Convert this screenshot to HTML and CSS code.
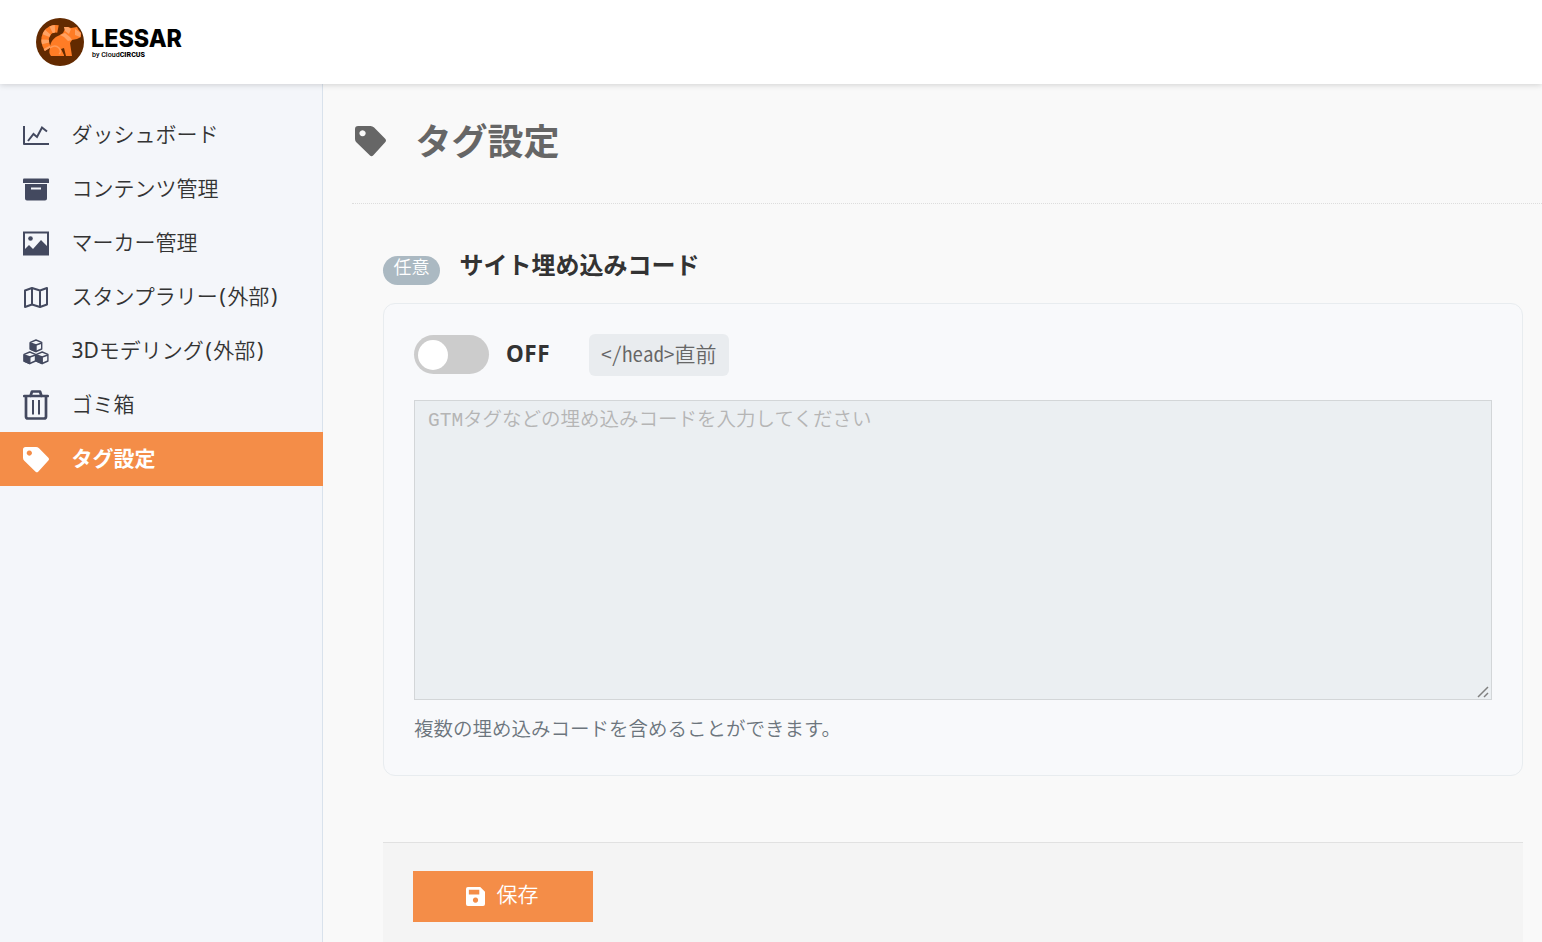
FILE: index.html
```html
<!DOCTYPE html>
<html lang="ja">
<head>
    <meta charset="UTF-8">
    <meta name="viewport" content="width=device-width, initial-scale=1.0">
    <title>タグ設定 | LESSAR</title>
    <link rel="stylesheet" href="styles.css">
</head>
<body>
    <header class="header">
        <a class="logo" href="#">
            <svg width="150" height="50" viewBox="0 0 150 50">
                <circle cx="25" cy="25" r="24" fill="#632a00"/>
                <!-- tail -->
                <path d="M23 12C13 10 6 21 13 32" fill="none" stroke="#ff7c25" stroke-width="7.5"/>
                <path d="M23 12C13 10 6 21 13 32" fill="none" stroke="#ffa263" stroke-width="7.5" stroke-dasharray="4 4" stroke-dashoffset="-3"/>
                <!-- body -->
                <path d="M30 12L29 10L33 10L36 11L42 10L43 12L46 16L46 20L42 22L37 23L35 26L37 39H31L29 31L26 32L29 38V39H16C14 37 14 34 15 31C15 25 19 20 25 18L28 16Z" fill="#ff7c25"/>
                <path d="M29 10L33 10L36 12L34 17L30 14ZM40 12L46 16L45 20L40 18ZM25 18L30 16L35 20L37 23L33 24L29 20Z" fill="#ffa263"/>
                <path d="M15 31Q20 27 24 31Q27 35 24 37" fill="none" stroke="#ff9b57" stroke-width="1.5"/>
                <text class="logo-name" x="56" y="29.5" textLength="91" lengthAdjust="spacingAndGlyphs">LESSAR</text>
                <text class="logo-by" x="57" y="40" textLength="53" lengthAdjust="spacingAndGlyphs">by Cloud<tspan class="logo-circus">CIRCUS</tspan></text>
            </svg>
        </a>
    </header>

    <div class="wrapper">
        <nav class="sidebar">
            <a class="nav-item" href="#">
                <svg class="nav-icon" viewBox="0 0 26 26" fill="none" stroke="currentColor" stroke-width="2"><path d="M1 3V21H26" stroke-linejoin="round"/><path d="M5 18L10.5 11L14 14L19 4.5L24 8.5"/></svg>
                <span>ダッシュボード</span>
            </a>
            <a class="nav-item" href="#">
                <svg class="nav-icon" viewBox="0 0 26 26" fill="currentColor"><path d="M1 1.5H25Q26 1.5 26 2.5V6H0V2.5Q0 1.5 1 1.5Z"/><path fill-rule="evenodd" d="M2 7H24V21.5Q24 23.5 22 23.5H4Q2 23.5 2 21.5ZM8 10.5V12.5H18V10.5Z"/></svg>
                <span>コンテンツ管理</span>
            </a>
            <a class="nav-item" href="#">
                <svg class="nav-icon" viewBox="0 0 26 26" fill="currentColor"><path fill-rule="evenodd" d="M0 0.5H26V24.5H0ZM2 2.5V18L6 14L10 18L18 9L24 15V2.5Z"/><circle cx="7.5" cy="7.5" r="2.3"/></svg>
                <span>マーカー管理</span>
            </a>
            <a class="nav-item" href="#">
                <svg class="nav-icon" viewBox="0 0 26 26" fill="none" stroke="currentColor" stroke-width="2" stroke-linejoin="round"><path d="M2 5.5L9 3L17 5.5L24 3V19.5L17 22L9 19.5L2 22ZM9 3V19.5M17 5.5V22"/></svg>
                <span>スタンプラリー<i class="paren">(</i>外部<i class="paren">)</i></span>
            </a>
            <a class="nav-item" href="#">
                <svg class="nav-icon" viewBox="0 0 26 26" stroke="currentColor" stroke-width="1.4" stroke-linejoin="round">
                    <g id="cube"><path fill="none" d="M13 1L18.7 3.3V10L13 12.5L7.3 10V3.3Z"/><path fill="currentColor" d="M7.3 4L13 6V12.5L7.3 10Z"/><path fill="none" d="M13 6L18.7 4"/></g>
                    <use href="#cube" x="-6.2" y="12"/>
                    <use href="#cube" x="6.2" y="12"/>
                </svg>
                <span><i class="latin">3D</i>モデリング<i class="paren">(</i>外部<i class="paren">)</i></span>
            </a>
            <a class="nav-item" href="#">
                <svg class="nav-icon nav-icon-trash" viewBox="0 0 26 30" fill="none" stroke="currentColor"><path stroke-width="2.7" stroke-linejoin="round" stroke-linecap="round" d="M1.3 6H24.7M3 6V26.5Q3 28.5 5 28.5H21Q23 28.5 23 26.5V6M7.5 6L9 1.5H17L18.5 6"/><path stroke-width="2" d="M10 10V24.5M16 10V24.5"/></svg>
                <span>ゴミ箱</span>
            </a>
            <a class="nav-item active" href="#">
                <svg class="nav-icon" viewBox="0 0 30 30" fill="currentColor"><path fill-rule="evenodd" d="M3 0H15Q17 0 18.5 1.5L29 12Q31 14 29 16L17.5 28.5Q16 30 14.5 28.5L1.5 16Q0 14.5 0 12.5V3Q0 0 3 0ZM7.3 4A3 3 0 1 0 7.31 4Z"/></svg>
                <span>タグ設定</span>
            </a>
        </nav>

        <main class="content">
            <div class="page-title">
                <svg class="title-icon" viewBox="0 0 30 30" fill="currentColor"><path fill-rule="evenodd" d="M3 0H15Q17 0 18.5 1.5L29 12Q31 14 29 16L17.5 28.5Q16 30 14.5 28.5L1.5 16Q0 14.5 0 12.5V3Q0 0 3 0ZM7.3 4A3 3 0 1 0 7.31 4Z"/></svg>
                <h1>タグ設定</h1>
            </div>

            <form class="form">
                <div class="form-label">
                    <span class="badge">任意</span>
                    <label for="embedCode">サイト埋め込みコード</label>
                </div>

                <div class="card">
                    <div class="switch-row">
                        <span class="switch"></span>
                        <span class="switch-text">OFF</span>
                        <code class="position">&lt;/head&gt;直前</code>
                    </div>
                    <textarea id="embedCode" placeholder="GTMタグなどの埋め込みコードを入力してください"></textarea>
                    <p class="help">複数の埋め込みコードを含めることができます。</p>
                </div>

                <div class="form-footer">
                    <button type="button" class="save-button">
                        <svg width="19" height="19" viewBox="0 0 20 20" fill="currentColor"><path fill-rule="evenodd" d="M2 0H15L20 5V18Q20 20 18 20H2Q0 20 0 18V2Q0 0 2 0ZM3 3V8H14V3ZM10 11A2.8 2.8 0 1 0 10.01 11Z"/></svg>
                        <span>保存</span>
                    </button>
                </div>
            </form>
        </main>
    </div>
</body>
</html>
```
FILE: styles.css
```css
* {
    box-sizing: border-box;
}

body {
    margin: 0;
    height: 100vh;
    overflow: hidden;
    display: flex;
    flex-direction: column;
    font-family: "Noto Sans", "Noto Sans CJK JP", sans-serif;
    color: #333;
    background-color: #f9f9f9;
}

/* Header */
.header {
    position: relative;
    z-index: 1;
    flex: none;
    height: 84px;
    padding: 17px 35px;
    background-color: #fff;
    box-shadow: 0 1px 6px rgba(0,0,0,0.16);
}

.logo svg {
    display: block;
}

.logo-name {
    font-family: Inter, sans-serif;
    font-size: 24px;
    font-weight: 800;
}

.logo-by {
    font-family: Roboto, sans-serif;
    font-size: 8px;
    font-weight: 500;
}

.logo-circus {
    font-weight: 900;
}

.wrapper {
    display: flex;
    flex: 1;
    min-height: 0;
}

/* Sidebar */
.sidebar {
    flex: none;
    width: 323px;
    padding-top: 24px;
    background-color: #f4f6fa;
    border-right: 1px solid #d9e2ec;
}

.nav-item {
    display: flex;
    align-items: center;
    gap: 22.5px;
    height: 54px;
    padding-left: 23px;
    color: #43495f;
    text-decoration: none;
}

.nav-icon {
    width: 26px;
    height: 26px;
    margin-top: 1px;
}

.nav-icon-trash {
    height: 30px;
    margin-top: 0;
}

.nav-item span {
    padding-bottom: 3px;
    font-size: 21px;
    font-weight: 350;
    line-height: 30px;
    color: #333;
}

.paren {
    padding: 0 1.6px;
    font-style: normal;
    font-weight: 400;
}

.latin {
    font-style: normal;
    font-weight: 400;
}

.nav-item.active {
    margin-right: -1px;
    background-color: #f48d48;
    color: #fff;
}

.nav-item.active span {
    color: #fff;
    font-weight: bold;
}

/* Main area */
.content {
    display: flex;
    flex-direction: column;
    flex: 1;
    padding-left: 29px;
}

.page-title {
    display: flex;
    flex: none;
    align-items: center;
    gap: 29.5px;
    height: 120px;
    padding: 0 0 5px 3px;
    border-bottom: 1px dotted #ddd;
    color: #666;
}

.title-icon {
    width: 31px;
    height: 31px;
}

.page-title h1 {
    margin: 0;
    padding-top: 2px;
    font-size: 36px;
    line-height: 54px;
}

.form {
    display: flex;
    flex-direction: column;
    flex: 1;
    padding: 41px 19px 0 31px;
}

.form-label {
    display: flex;
    flex: none;
    gap: 19.5px;
    height: 58px;
}

.badge {
    width: 57px;
    height: 29px;
    margin-top: 11px;
    border-radius: 15px;
    background-color: #abb9c2;
    color: #fff;
    font-size: 18px;
    font-weight: 350;
    line-height: 23px;
    text-align: center;
}

.form-label label {
    font-size: 24px;
    font-weight: bold;
    line-height: 40px;
}

.card {
    flex: none;
    height: 473px;
    padding: 30px;
    border: 1px solid #e8ecef;
    border-radius: 12px;
    background-color: #f8f9fb;
}

.switch-row {
    display: flex;
    align-items: center;
    height: 42px;
    margin-bottom: 24px;
}

.switch {
    width: 75px;
    height: 39px;
    margin-bottom: 1px;
    padding: 5px 4px;
    border-radius: 20px;
    background-color: #ccc;
}

.switch::before {
    content: "";
    display: block;
    width: 30px;
    height: 30px;
    border-radius: 50%;
    background-color: #fff;
}

.switch-text {
    width: 83px;
    margin-left: 17px;
    padding-bottom: 3px;
    font-size: 22.5px;
    font-weight: bold;
    letter-spacing: 0.5px;
}

.position {
    height: 42px;
    padding: 0 12px;
    border-radius: 6px;
    background-color: #e9ecef;
    color: #666;
    font-family: "Noto Sans CJK JP", sans-serif;
    font-feature-settings: "hwid";
    font-size: 21px;
    font-weight: 350;
    line-height: 39px;
}

textarea {
    display: block;
    width: 100%;
    height: 300px;
    padding: 6px 13px;
    border: 1px solid #d3d6d8;
    background-color: #ebeff2;
    font-family: "Liberation Mono", "Noto Sans CJK JP", monospace;
    font-size: 19.5px;
    font-weight: 350;
    line-height: 29px;
}

textarea::placeholder {
    color: #b5b5b5;
}

textarea::-webkit-resizer {
    background: url("data:image/svg+xml,%3Csvg xmlns='http://www.w3.org/2000/svg' width='15' height='15'%3E%3Cpath d='M2 13L12 3M8 13L12 9' stroke='%23808080' stroke-width='1.5'/%3E%3C/svg%3E") no-repeat;
}

.help {
    margin: 14px 0 0;
    color: #6c757d;
    font-size: 19.5px;
    font-weight: 350;
    line-height: 29px;
}

.form-footer {
    flex: 1;
    margin-top: 66px;
    padding: 28px 30px 0;
    border-top: 1px solid #e1e1e1;
    background-color: #f4f4f4;
}

.save-button {
    display: flex;
    align-items: center;
    justify-content: center;
    gap: 12px;
    width: 180px;
    height: 51px;
    padding: 0 2px 0 0;
    border: none;
    background-color: #f48d48;
    color: #fff;
    font-family: inherit;
    font-size: 21px;
    font-weight: 350;
}

.save-button span {
    padding-bottom: 7px;
}
```
